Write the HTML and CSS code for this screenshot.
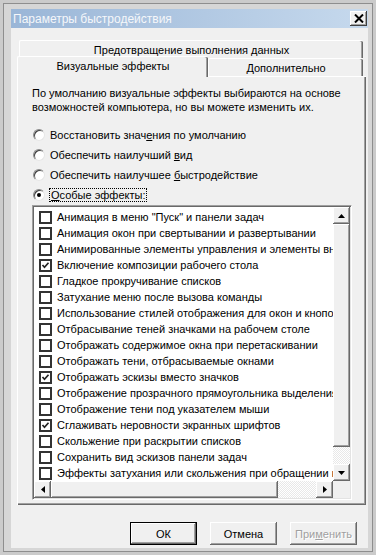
FILE: index.html
```html
<!DOCTYPE html>
<html lang="ru">
<head>
    <meta charset="UTF-8">
    <title>Параметры быстродействия</title>
    <link rel="stylesheet" href="styles.css">
</head>
<body>
    <div class="window">
        <div class="frame">
            <div class="titlebar">
                <span class="title">Параметры быстродействия</span>
                <button class="close">
                    <svg width="10" height="9" viewBox="0 0 10 9"><path d="M1 0.5 L9 8.5 M9 0.5 L1 8.5" stroke="#000" stroke-width="2"/></svg>
                </button>
            </div>
            <div class="client">
                <div class="tab-row back">
                    <div class="tab wide">Предотвращение выполнения данных</div>
                </div>
                <div class="tab-row front">
                    <div class="tab active">Визуальные эффекты</div>
                    <div class="tab other">Дополнительно</div>
                </div>
                <div class="panel">
                    <p class="intro">По умолчанию визуальные эффекты выбираются на основе<br>возможностей компьютера, но вы можете изменить их.</p>
                    <div class="radios">
                        <div class="radio"><span class="dot"></span><span>Восстановить знач<u>е</u>ния по умолчанию</span></div>
                        <div class="radio"><span class="dot"></span><span>Обеспечить наилучший <u>в</u>ид</span></div>
                        <div class="radio"><span class="dot"></span><span>Обеспечить наилучшее <u>б</u>ыстродействие</span></div>
                        <div class="radio"><span class="dot on"></span><span class="focus"><u>О</u>собые эффекты:</span></div>
                    </div>
                    <div class="listbox">
                        <div class="items" id="items"></div>
                        <div class="vscroll">
                            <div class="sbtn"><svg width="7" height="4" viewBox="0 0 7 4"><path d="M3.5 0 L7 4 L0 4 Z"/></svg></div>
                            <div class="thumb v"></div>
                            <div class="track"></div>
                            <div class="sbtn"><svg width="7" height="4" viewBox="0 0 7 4"><path d="M0 0 L7 0 L3.5 4 Z"/></svg></div>
                        </div>
                        <div class="hscroll">
                            <div class="sbtn"><svg width="4" height="7" viewBox="0 0 4 7"><path d="M4 0 L4 7 L0 3.5 Z"/></svg></div>
                            <div class="thumb h"></div>
                            <div class="track"></div>
                            <div class="sbtn"><svg width="4" height="7" viewBox="0 0 4 7"><path d="M0 0 L4 3.5 L0 7 Z"/></svg></div>
                        </div>
                        <div class="corner"></div>
                    </div>
                </div>
                <div class="buttons">
                    <button class="btn default">ОК</button>
                    <button class="btn">Отмена</button>
                    <button class="btn disabled">При<u>м</u>енить</button>
                </div>
            </div>
        </div>
    </div>

    <script>
        const effects = [
            ['Анимация в меню "Пуск" и панели задач', false],
            ['Анимация окон при свертывании и развертывании', false],
            ['Анимированные элементы управления и элементы внутри окна', false],
            ['Включение композиции рабочего стола', true],
            ['Гладкое прокручивание списков', false],
            ['Затухание меню после вызова команды', false],
            ['Использование стилей отображения для окон и кнопок', false],
            ['Отбрасывание теней значками на рабочем столе', false],
            ['Отображать содержимое окна при перетаскивании', false],
            ['Отображать тени, отбрасываемые окнами', false],
            ['Отображать эскизы вместо значков', true],
            ['Отображение прозрачного прямоугольника выделения', false],
            ['Отображение тени под указателем мыши', false],
            ['Сглаживать неровности экранных шрифтов', true],
            ['Скольжение при раскрытии списков', false],
            ['Сохранить вид эскизов панели задач', false],
            ['Эффекты затухания или скольжения при обращении к меню', false]
        ];
        const list = document.getElementById("items");
        effects.forEach(([label, checked]) => {
            const row = document.createElement("div");
            row.className = "item";
            row.innerHTML = `
                <span class="check">${checked ? '<svg width="9" height="9" viewBox="0 0 9 9"><path d="M1.5 4 L3.5 6.2 L7.5 1.8" fill="none" stroke="#222" stroke-width="1.7"/></svg>' : ''}</span>
                <span class="label">${label}</span>
            `;
            list.appendChild(row);
        });
    </script>
</body>
</html>
```

FILE: styles.css
```css
body {
    margin: 0;
    font-family: "Liberation Sans", Arial, sans-serif;
    font-size: 11px;
    color: #000;
}
.window {
    width: 376px;
    height: 555px;
    box-sizing: border-box;
    border: 3px solid #cbcbcb;
}
.frame {
    height: 100%;
    box-sizing: border-box;
    border: 1px solid #8e8e8e;
    background: #d6d6d6;
    padding: 5px 4px 3px 7px;
    display: flex;
    flex-direction: column;
}
.titlebar {
    height: 19px;
    flex: none;
    display: flex;
    align-items: center;
    justify-content: space-between;
    padding: 0 1px 0 2px;
    background: linear-gradient(to right, #9ab6d7, #c6d9ed);
}
.title {
    color: #f5f7fa;
    font-size: 12px;
}
.close {
    width: 17px;
    height: 15px;
    padding: 0;
    margin: 0;
    display: flex;
    align-items: center;
    justify-content: center;
    background: #f0f0f0;
    border: none;
    box-shadow: inset -1px -1px #404040, inset 1px 1px #fff, inset -2px -2px #a0a0a0;
}
.client {
    flex: 1;
    background: #f0f0f0;
    padding: 0 2px 0 6px;
}
.tab-row {
    display: flex;
}
.tab-row.back {
    margin: 12px 0 0 2px;
}
.tab {
    box-sizing: border-box;
    height: 18px;
    display: flex;
    align-items: center;
    justify-content: center;
    background: #f0f0f0;
    border-top: 1px solid #fff;
    border-left: 1px solid #fff;
    box-shadow: inset -1px 0 #696969, inset -2px 0 #a0a0a0;
    border-radius: 2px 2px 0 0;
}
.tab.wide {
    width: 344px;
}
.tab.active {
    width: 191px;
    height: 21px;
    margin-top: -2px;
    margin-bottom: -1px;
    position: relative;
    z-index: 1;
    padding-bottom: 2px;
}
.tab.other {
    width: 155px;
}
.panel {
    width: 349px;
    height: 429px;
    box-sizing: border-box;
    border-top: 1px solid #fff;
    border-left: 1px solid #fff;
    box-shadow: inset -1px -1px #696969, inset -2px -2px #a0a0a0;
    padding: 9px 0 0 14px;
}
.intro {
    margin: 0;
    line-height: 14px;
}
.radios {
    margin-top: 11px;
}
.radio {
    height: 20px;
    display: flex;
    align-items: center;
    gap: 5px;
    padding-left: 1px;
}
.dot {
    width: 12px;
    height: 12px;
    box-sizing: border-box;
    border-radius: 50%;
    background: #fff;
    border: 1px solid;
    border-color: #8a8a8a #e6e6e6 #e6e6e6 #8a8a8a;
    box-shadow: inset 1px 1px #404040;
    display: flex;
    align-items: center;
    justify-content: center;
}
.dot.on::after {
    content: "";
    width: 4px;
    height: 4px;
    border-radius: 50%;
    background: #000;
}
.focus {
    outline: 1px dotted #000;
    outline-offset: 0;
    padding: 0 1px;
}
.listbox {
    margin-top: 0;
    width: 320px;
    box-sizing: border-box;
    border: 1px solid;
    border-color: #a0a0a0 #fff #fff #a0a0a0;
    box-shadow: inset 1px 1px #696969, inset -1px -1px #e3e3e3;
    padding: 1px;
    display: grid;
    grid-template-columns: 299px 17px;
    grid-template-rows: 274px 17px;
    background: #fff;
}
.items {
    padding-top: 2px;
    overflow: hidden;
}
.item {
    height: 16px;
    display: flex;
    align-items: center;
    white-space: nowrap;
    padding-left: 5px;
    gap: 5px;
}
.check {
    width: 13px;
    height: 13px;
    flex: none;
    box-sizing: border-box;
    border: 2px solid #333;
    background: #fff;
    display: flex;
    align-items: center;
    justify-content: center;
}
.vscroll {
    display: flex;
    flex-direction: column;
}
.hscroll {
    display: flex;
}
.sbtn, .thumb {
    flex: none;
    width: 17px;
    height: 17px;
    box-sizing: border-box;
    background: #f0f0f0;
    box-shadow: inset -1px -1px #696969, inset 1px 1px #fff, inset -2px -2px #a0a0a0;
    display: flex;
    align-items: center;
    justify-content: center;
}
.thumb.v {
    height: 223px;
}
.thumb.h {
    width: 227px;
}
.track {
    flex: 1;
    background: repeating-conic-gradient(#fff 0 25%, #e8e8e8 0 50%) 0 0 / 2px 2px;
}
.corner {
    background: #f0f0f0;
}
.buttons {
    display: flex;
    justify-content: flex-end;
    gap: 13px;
    margin-top: 17px;
    padding-right: 9px;
}
.btn {
    width: 67px;
    height: 23px;
    margin: 0;
    padding: 0;
    font-family: inherit;
    font-size: 11px;
    background: #f0f0f0;
    border: none;
    box-shadow: inset -1px -1px #696969, inset 1px 1px #fff, inset -2px -2px #a0a0a0;
}
.btn.default {
    box-shadow: inset 0 0 0 1px #000, inset -2px -2px #696969, inset 2px 2px #fff, inset -3px -3px #a0a0a0;
}
.btn.disabled {
    color: #a0a0a0;
    text-shadow: 1px 1px #fff;
}
```
